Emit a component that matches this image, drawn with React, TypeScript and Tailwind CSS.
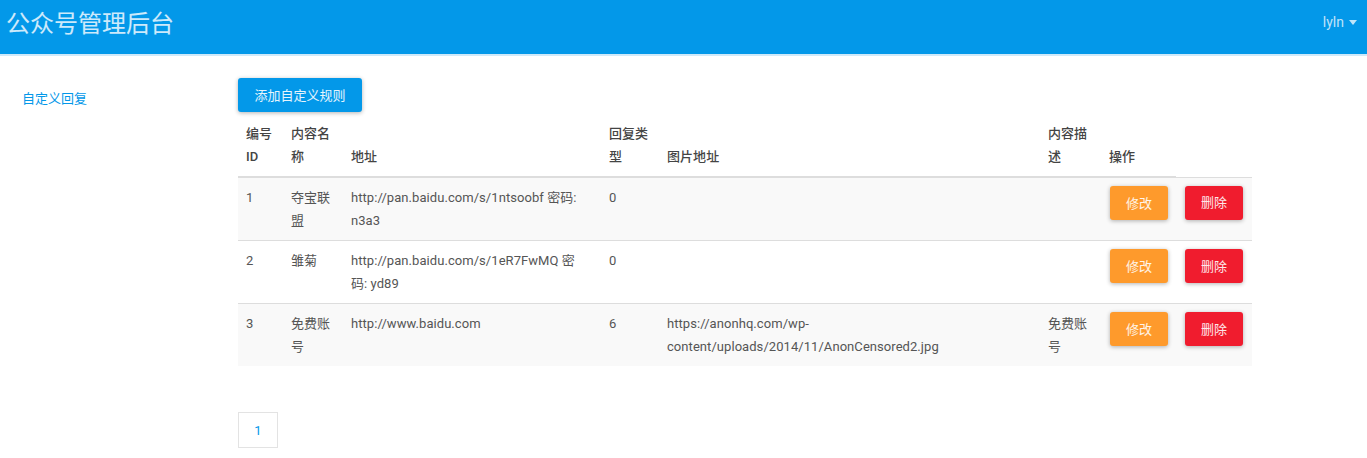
import React from 'react';

type Rule = {
  id: number;
  name: string;
  url: string[];
  type: number;
  picUrl: string;
  desc: string;
};

const rules: Rule[] = [
  { id: 1, name: '夺宝联盟', url: ['http://pan.baidu.com/s/1ntsoobf 密码:', 'n3a3'], type: 0, picUrl: '', desc: '' },
  { id: 2, name: '雏菊', url: ['http://pan.baidu.com/s/1eR7FwMQ 密', '码: yd89'], type: 0, picUrl: '', desc: '' },
  {
    id: 3,
    name: '免费账号',
    url: ['http://www.baidu.com'],
    type: 6,
    picUrl: 'https://anonhq.com/wp-content/uploads/2014/11/AnonCensored2.jpg',
    desc: '免费账号',
  },
];

const font = { fontFamily: 'Roboto, "Noto Sans CJK SC", sans-serif' };

export default function App() {
  return (
    <div className="min-h-[458px] bg-white text-[13px] leading-[23px] text-[#555]" style={font}>
      {/* top bar */}
      <div className="flex h-[56px] items-start justify-between border-b-2 border-[#cfe9f9] bg-[#0398e9]">
        <div className="pl-[6px] pt-[8px] text-[24px] leading-[32px] text-white/80">公众号管理后台</div>
        <div className="flex items-center gap-[5px] pr-[10px] pt-[11px] text-[14px] text-white/75">
          <span>lyln</span>
          <svg width="8" height="5" viewBox="0 0 8 5">
            <path d="M0 0 L8 0 L4 5 Z" fill="rgba(255,255,255,0.75)" />
          </svg>
        </div>
      </div>

      <div className="flex">
        {/* sidebar */}
        <div className="w-[238px] shrink-0 pl-[22px] pt-[31px]">
          <a className="text-[#0398e9]">自定义回复</a>
        </div>

        {/* main */}
        <div className="w-[1014px] pt-[22px]">
          <button className="h-[34px] w-[124px] rounded-[3px] bg-[#0398e9] text-white/90 shadow-[0_1px_4px_rgba(0,0,0,0.3)]">
            添加自定义规则
          </button>

          <table className="mt-[2px] w-full table-fixed border-collapse tracking-[0.06px]">
            <colgroup>
              <col className="w-[45px]" />
              <col className="w-[60px]" />
              <col className="w-[258px]" />
              <col className="w-[58px]" />
              <col className="w-[381px]" />
              <col className="w-[61px]" />
              <col className="w-[75px]" />
              <col className="w-[76px]" />
            </colgroup>
            <thead>
              <tr className="text-left align-bottom text-[#444]">
                <th className="border-b-2 border-[#ddd] px-2 py-2 font-medium">编号ID</th>
                <th className="border-b-2 border-[#ddd] px-2 py-2 font-medium">内容名称</th>
                <th className="border-b-2 border-[#ddd] px-2 py-2 font-medium">地址</th>
                <th className="border-b-2 border-[#ddd] px-2 py-2 font-medium">回复类型</th>
                <th className="border-b-2 border-[#ddd] px-2 py-2 font-medium">图片地址</th>
                <th className="border-b-2 border-[#ddd] px-2 py-2 font-medium">内容描述</th>
                <th className="border-b-2 border-[#ddd] px-2 py-2 font-medium">操作</th>
                <th className="px-2 py-2"></th>
              </tr>
            </thead>
            <tbody>
              {rules.map((r, i) => (
                <tr key={r.id} className={(i % 2 === 0 ? 'bg-[#f9f9f9]' : 'bg-white') + ' align-top'}>
                  <td className="border-t border-[#ddd] px-2 py-2">{r.id}</td>
                  <td className="border-t border-[#ddd] px-2 py-2">{r.name}</td>
                  <td className="border-t border-[#ddd] px-2 py-2">
                    {r.url.map((line) => (
                      <div key={line} className="whitespace-nowrap">{line}</div>
                    ))}
                  </td>
                  <td className="border-t border-[#ddd] px-2 py-2">{r.type}</td>
                  <td className="border-t border-[#ddd] px-2 py-2">{r.picUrl}</td>
                  <td className="border-t border-[#ddd] px-2 py-2">{r.desc}</td>
                  <td className="border-t border-[#ddd] px-2 py-2">
                    <button className="ml-px h-[34px] w-[58px] rounded-[3px] bg-[#fe9a2c] text-white/90 shadow-[0_1px_4px_rgba(0,0,0,0.3)]">
                      修改
                    </button>
                  </td>
                  <td className="border-t border-[#ddd] px-2 py-2">
                    <button className="ml-px h-[34px] w-[58px] rounded-[3px] bg-[#f01c2e] text-white/90 shadow-[0_1px_4px_rgba(0,0,0,0.3)]">
                      删除
                    </button>
                  </td>
                </tr>
              ))}
            </tbody>
          </table>

          <div className="mt-[46px] flex">
            <span className="flex h-[36px] w-[40px] items-center justify-center border border-[#e3e3e3] text-[#0398e9]">
              1
            </span>
          </div>
        </div>
      </div>
    </div>
  );
}
